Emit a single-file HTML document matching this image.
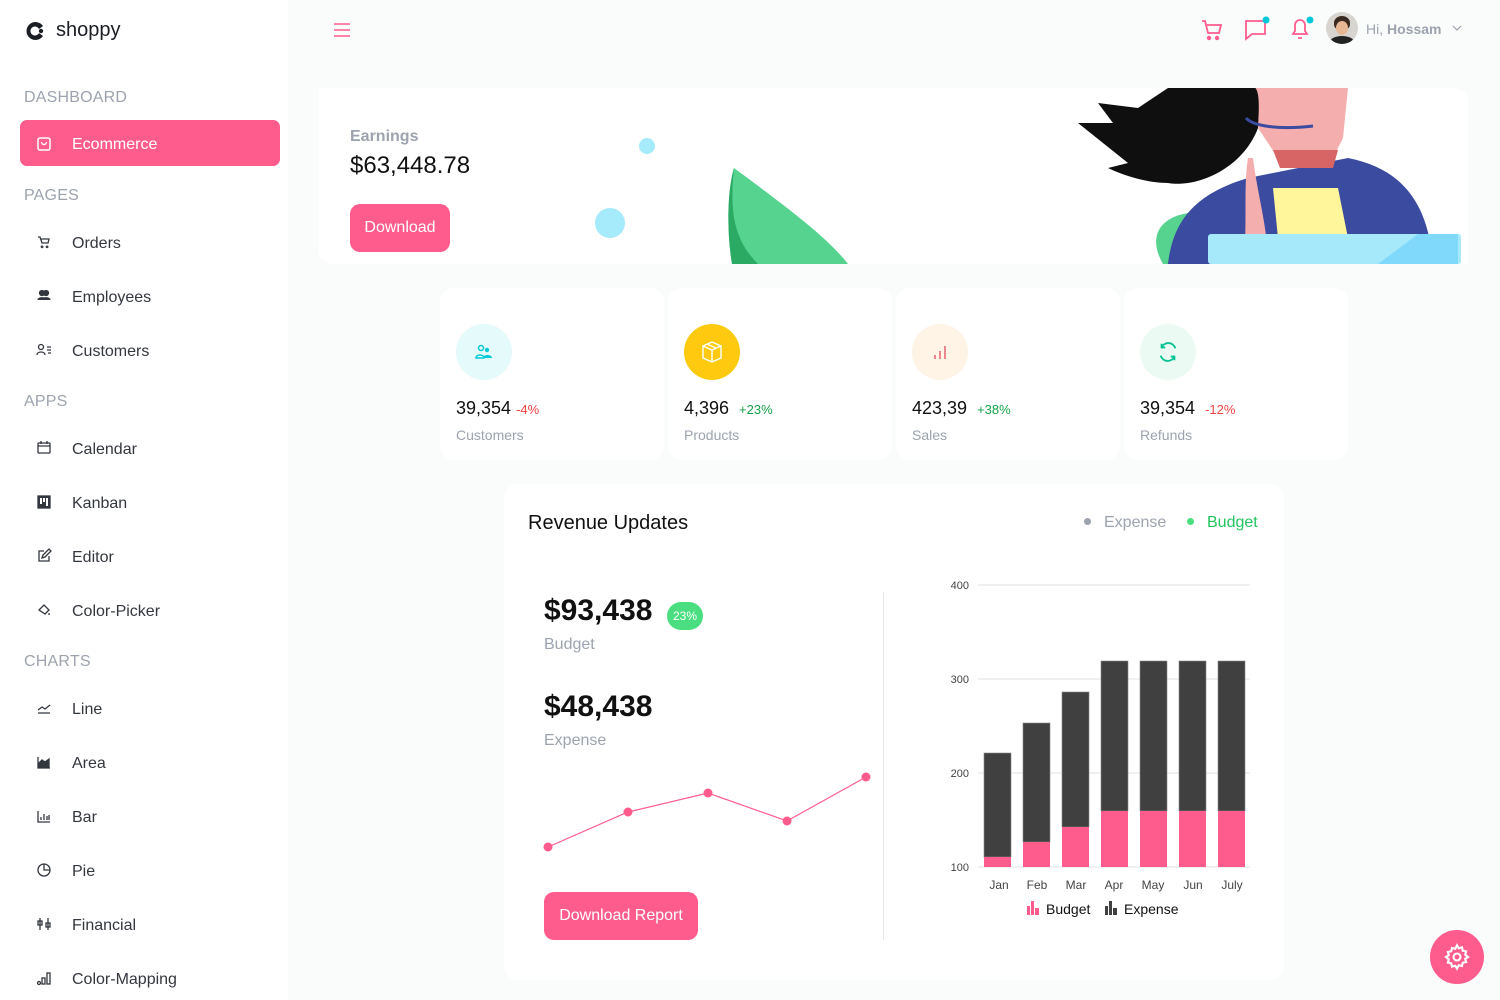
<!DOCTYPE html>
<html><head><meta charset="utf-8">
<style>
*{margin:0;padding:0;box-sizing:border-box}
body{width:1500px;height:1000px;overflow:hidden;background:#fafbfb;font-family:"Liberation Sans",sans-serif;position:relative;color:#33373e}
.a{position:absolute}
.sb{left:0;top:0;width:288px;height:1000px;background:#fff}
.sec{left:24px;font-size:16px;color:#9ca3af;letter-spacing:.2px;margin-top:2px}
.it{left:72px;font-size:16px;color:#33373e;margin-top:2px}
.card{background:#fff;border-radius:14px}
.num{font-size:18px;color:#111;margin-top:1px;font-weight:500}
.lab{font-size:14px;color:#9ca3af;margin-top:1px}
</style></head><body>
<div class="a sb">
  <svg class="a" style="left:24px;top:20px" width="22" height="22" viewBox="0 0 22 22"><path d="M19 6A9 9 0 1 0 19 16L15 13A4.5 4.5 0 1 1 15 9Z" fill="#1a1d24"/><circle cx="17" cy="11" r="2.2" fill="#1a1d24"/></svg>
  <div class="a" style="left:56px;top:19px;font-size:20px;color:#1a1d24">shoppy</div>
  <div class="a sec" style="top:87px">DASHBOARD</div>
  <div class="a" style="left:20px;top:120px;width:260px;height:46px;background:#ff5c8e;border-radius:7px"></div>
  <svg class="a" style="left:37px;top:136px" width="14" height="15" viewBox="0 0 14 15"><rect x="1" y="2" width="12" height="12" rx="2" fill="none" stroke="#fff" stroke-width="1.5"/><path d="M4.5 6a2.5 2.5 0 0 0 5 0" fill="none" stroke="#fff" stroke-width="1.4"/></svg>
  <div class="a" style="left:72px;top:136px;font-size:16px;color:#fff">Ecommerce</div>
  <div class="a sec" style="top:185px">PAGES</div>
  <div class="a it" style="top:233px">Orders</div>
  <div class="a it" style="top:287px">Employees</div>
  <div class="a it" style="top:341px">Customers</div>
  <div class="a sec" style="top:391px">APPS</div>
  <div class="a it" style="top:439px">Calendar</div>
  <div class="a it" style="top:493px">Kanban</div>
  <div class="a it" style="top:547px">Editor</div>
  <div class="a it" style="top:601px">Color-Picker</div>
  <div class="a sec" style="top:651px">CHARTS</div>
  <div class="a it" style="top:699px">Line</div>
  <div class="a it" style="top:753px">Area</div>
  <div class="a it" style="top:807px">Bar</div>
  <div class="a it" style="top:861px">Pie</div>
  <div class="a it" style="top:915px">Financial</div>
  <div class="a it" style="top:969px">Color-Mapping</div>
  <svg class="a" style="left:36px;top:234px" width="16" height="760" viewBox="0 0 16 760" fill="none" stroke="#33373e" stroke-width="1.3">
    <path d="M2 3h2l2 6h6l1-4H5M6 12a.8.8 0 1 0 .1 0M11 12a.8.8 0 1 0 .1 0"/>
    <g transform="translate(0,54)"><circle cx="6" cy="5" r="2.5" fill="#33373e"/><circle cx="10" cy="5" r="2.5" fill="#33373e"/><path d="M2 12c0-3 8-3 8 0M6 12c0-3 8-3 8 0" fill="#33373e"/></g>
    <g transform="translate(0,108)"><circle cx="5" cy="5" r="2.5"/><path d="M1 13c0-4 8-4 8 0M11 5h4M11 8h4M12 11h3"/></g>
    <g transform="translate(0,206)"><rect x="2" y="3" width="12" height="10" rx="1"/><path d="M2 6h12M5 1v3M11 1v3"/></g>
    <g transform="translate(0,260)"><rect x="2" y="2" width="12" height="12" fill="#33373e"/><rect x="4" y="4" width="2" height="6" fill="#fff" stroke="none"/><rect x="7" y="4" width="2" height="4" fill="#fff" stroke="none"/><rect x="10" y="4" width="2" height="8" fill="#fff" stroke="none"/></g>
    <g transform="translate(0,314)"><path d="M8 3H3v10h10V8M6 10l1-3 6-6 2 2-6 6z"/></g>
    <g transform="translate(0,368)"><path d="M3 8l5-5 5 5-4 4zM13 11v2"/></g>
    <g transform="translate(0,466)"><path d="M2 13h12M2 10l4-3 3 2 5-4"/></g>
    <g transform="translate(0,520)"><path d="M2 3v11h12" /><path d="M3 13V9l3-3 3 2 4-3v8z" fill="#33373e"/></g>
    <g transform="translate(0,574)"><path d="M2 3v11h12M5 12V9M8 12V6M11 12V8M13 12V7"/></g>
    <g transform="translate(0,628)"><circle cx="8" cy="8" r="6"/><path d="M8 2v6h6"/></g>
    <g transform="translate(0,682)"><path d="M4 2v12M12 2v12"/><rect x="2" y="5" width="4" height="4"/><rect x="10" y="7" width="4" height="4"/></g>
    <g transform="translate(0,736)"><circle cx="3" cy="13" r="1.5"/><rect x="6" y="8" width="3" height="6"/><rect x="11" y="3" width="3" height="11"/></g>
  </svg>
</div>

<svg class="a" style="left:333px;top:22px" width="18" height="16"><path d="M1 2h16M1 8h16M1 14h16" stroke="#ff5c8e" stroke-width="1.6"/></svg>
<svg class="a" style="left:1200px;top:18px" width="24" height="24" viewBox="0 0 24 24" fill="none" stroke="#ff5c8e" stroke-width="1.8"><path d="M2 3h3l3 12h11l2-8H7"/><circle cx="9" cy="20" r="1.3" fill="#ff5c8e"/><circle cx="17" cy="20" r="1.3" fill="#ff5c8e"/></svg>
<svg class="a" style="left:1244px;top:16px" width="28" height="26" viewBox="0 0 28 26" fill="none" stroke="#ff5c8e" stroke-width="1.8"><path d="M2 5h19v13H8l-6 5z"/><circle cx="22" cy="4" r="3.5" fill="#03c9d7" stroke="none"/></svg>
<svg class="a" style="left:1288px;top:14px" width="28" height="28" viewBox="0 0 28 28" fill="none" stroke="#ff5c8e" stroke-width="1.8"><path d="M5 20h14l-2-3V11a5 5 0 0 0-10 0v6zM10 24h4"/><circle cx="22" cy="6" r="3.5" fill="#03c9d7" stroke="none"/></svg>
<div class="a" style="left:1326px;top:12px;width:32px;height:32px;border-radius:50%;background:#d8d4d0;overflow:hidden"><div class="a" style="left:8px;top:4px;width:16px;height:14px;border-radius:50% 50% 40% 40%;background:#3a2a20"></div><div class="a" style="left:10px;top:9px;width:12px;height:14px;border-radius:50%;background:#e8b896"></div><div class="a" style="left:4px;top:24px;width:24px;height:12px;border-radius:50% 50% 0 0;background:#222"></div></div>
<div class="a" style="left:1366px;top:21px;font-size:14px;color:#9ca3af"><span>Hi,</span> <b>Hossam</b></div>
<svg class="a" style="left:1452px;top:24px" width="10" height="8"><path d="M1 2l4 4 4-4" stroke="#9ca3af" fill="none" stroke-width="1.2"/></svg>

<div class="a card" style="left:318px;top:88px;width:1150px;height:176px;overflow:hidden;border-radius:0 14px 0 14px">
  <div class="a" style="left:32px;top:40px;font-size:16px;font-weight:bold;color:#9ca3af">Earnings</div>
  <div class="a" style="left:32px;top:64px;font-size:24px;color:#111">$63,448.78</div>
  <div class="a" style="left:32px;top:116px;width:100px;height:48px;background:#ff5c8e;border-radius:10px;color:#fff;font-size:16px;text-align:center;line-height:48px">Download</div>
  <svg class="a" style="left:0;top:0" width="1150" height="176">
    <circle cx="329" cy="58" r="8" fill="#a5ebfb"/>
    <circle cx="292" cy="135" r="15" fill="#a5ebfb"/>
    <path d="M416 80C470 120 510 150 530 176H414C408 140 410 100 416 80Z" fill="#56d38f"/>
    <path d="M416 80C412 120 414 150 440 176H414C408 140 410 100 416 80Z" fill="#2aaa63"/>
    <path d="M845 176C830 150 840 130 870 125L880 176Z" fill="#56d38f"/>
    <path d="M850 176C855 130 880 105 930 90L1030 70C1080 80 1110 110 1115 176Z" fill="#3a4ba0"/>
    <path d="M955 100L1020 100L1030 150H960Z" fill="#fff59a"/>
    <path d="M935 0H1030L1025 50L1015 70H960L940 40Z" fill="#f5aeae"/>
    <path d="M955 62H1020L1015 80H962Z" fill="#d86565"/>
    <path d="M930 0C945 -10 940 30 940 40C925 80 880 100 850 95C820 95 790 80 790 80L810 75L760 35L795 35L780 15L820 20L850 0Z" fill="#0f0f10"/>
    <path d="M935 70C940 110 950 140 950 176H925C930 140 925 100 930 70Z" fill="#f5aeae"/>
    <path d="M928 30C935 38 960 42 995 38" stroke="#3a4ba0" stroke-width="3" fill="none"/>
    <rect x="890" y="146" width="253" height="30" rx="3" fill="#a5e9fb"/>
    <path d="M1060 176L1100 146H1140V176Z" fill="#80d8fb"/>
  </svg>
</div>

<div class="a card" style="left:440px;top:288px;width:224px;height:172px"></div>
<div class="a card" style="left:668px;top:288px;width:224px;height:172px"></div>
<div class="a card" style="left:896px;top:288px;width:224px;height:172px"></div>
<div class="a card" style="left:1124px;top:288px;width:224px;height:172px"></div>
<div class="a" style="left:456px;top:324px;width:56px;height:56px;border-radius:50%;background:#e5fafb"></div>
<div class="a" style="left:684px;top:324px;width:56px;height:56px;border-radius:50%;background:#fec90f"></div>
<div class="a" style="left:912px;top:324px;width:56px;height:56px;border-radius:50%;background:#fff4e5"></div>
<div class="a" style="left:1140px;top:324px;width:56px;height:56px;border-radius:50%;background:#ebfaf2"></div>
<svg class="a" style="left:474px;top:342px" width="20" height="20" viewBox="0 0 20 20" fill="#03c9d7"><circle cx="7" cy="6" r="2.5" fill="none" stroke="#03c9d7" stroke-width="1.5"/><circle cx="13" cy="8" r="2.2"/><path d="M2 16c0-4 8-4 8 0z" fill="none" stroke="#03c9d7" stroke-width="1.5"/><path d="M9 16c0-4 9-4 9 0z"/></svg>
<svg class="a" style="left:700px;top:340px" width="24" height="24" viewBox="0 0 24 24" fill="none" stroke="#fff" stroke-width="1.4"><path d="M12 2l9 4v12l-9 4-9-4V6zM3 6l9 4 9-4M12 10v12M7 4l9 4"/></svg>
<svg class="a" style="left:930px;top:342px" width="20" height="20"><path d="M5 17v-4M10 17V9M15 17V4" stroke="#e46a76" stroke-width="1.6"/></svg>
<svg class="a" style="left:1157px;top:341px" width="22" height="22" viewBox="0 0 24 24" fill="none" stroke="#00c292" stroke-width="2"><path d="M20 8A8 8 0 0 0 5 7M4 16a8 8 0 0 0 15 1M5 3v4h4M19 21v-4h-4"/></svg>
<div class="a num" style="left:456px;top:397px">39,354 <span style="font-size:13px;color:#ef4444">-4%</span></div>
<div class="a num" style="left:684px;top:397px">4,396 &nbsp;<span style="font-size:13px;color:#16a34a">+23%</span></div>
<div class="a num" style="left:912px;top:397px">423,39 &nbsp;<span style="font-size:13px;color:#16a34a">+38%</span></div>
<div class="a num" style="left:1140px;top:397px">39,354 &nbsp;<span style="font-size:13px;color:#ef4444">-12%</span></div>
<div class="a lab" style="left:456px;top:426px">Customers</div>
<div class="a lab" style="left:684px;top:426px">Products</div>
<div class="a lab" style="left:912px;top:426px">Sales</div>
<div class="a lab" style="left:1140px;top:426px">Refunds</div>

<div class="a card" style="left:504px;top:484px;width:780px;height:496px"></div>
<div class="a" style="left:528px;top:512px;font-size:20px;color:#111">Revenue Updates</div>
<div class="a" style="left:1084px;top:518px;width:7px;height:7px;border-radius:50%;background:#9ca3af"></div>
<div class="a" style="left:1104px;top:514px;font-size:16px;color:#9ca3af">Expense</div>
<div class="a" style="left:1187px;top:518px;width:7px;height:7px;border-radius:50%;background:#4ade80"></div>
<div class="a" style="left:1207px;top:514px;font-size:16px;color:#22c55e">Budget</div>
<div class="a" style="left:544px;top:594px;font-size:30px;font-weight:bold;color:#111">$93,438</div>
<div class="a" style="left:667px;top:602px;width:36px;height:28px;border-radius:14px;background:#4ade80;color:#fff;font-size:12px;text-align:center;line-height:28px">23%</div>
<div class="a" style="left:544px;top:636px;font-size:16px;color:#9ca3af">Budget</div>
<div class="a" style="left:544px;top:690px;font-size:30px;font-weight:bold;color:#111">$48,438</div>
<div class="a" style="left:544px;top:732px;font-size:16px;color:#9ca3af">Expense</div>
<div class="a" style="left:544px;top:892px;width:154px;height:48px;background:#ff5c8e;border-radius:10px;color:#fff;font-size:16px;text-align:center;line-height:48px">Download Report</div>
<div class="a" style="left:883px;top:592px;width:1px;height:348px;background:#e5e7eb"></div>
<svg class="a" style="left:0;top:0" width="1500" height="1000">
  <polyline points="548,847 628,812 708,793 787,821 866,777" fill="none" stroke="#ff5c8e" stroke-width="1.2"/>
  <g fill="#ff5c8e"><circle cx="548" cy="847" r="4.5"/><circle cx="628" cy="812" r="4.5"/><circle cx="708" cy="793" r="4.5"/><circle cx="787" cy="821" r="4.5"/><circle cx="866" cy="777" r="4.5"/></g>
  <g stroke="#ebebeb" stroke-width="1.5"><path d="M978 585H1250M978 679H1250M978 773H1250M978 867H1250"/></g>
  <g font-family="Liberation Sans" font-size="11" fill="#444" text-anchor="end"><text x="969" y="589">400</text><text x="969" y="683">300</text><text x="969" y="777">200</text><text x="969" y="871">100</text></g>
  <g fill="#404040" stroke="#888" stroke-width=".6">
    <rect x="984" y="753" width="27" height="104"/><rect x="1023" y="723" width="27" height="119"/><rect x="1062" y="692" width="27" height="135"/>
    <rect x="1101" y="661" width="27" height="150"/><rect x="1140" y="661" width="27" height="150"/><rect x="1179" y="661" width="27" height="150"/><rect x="1218" y="661" width="27" height="150"/>
  </g>
  <g fill="#ff5c8e">
    <rect x="984" y="857" width="27" height="10"/><rect x="1023" y="842" width="27" height="25"/><rect x="1062" y="827" width="27" height="40"/>
    <rect x="1101" y="811" width="27" height="56"/><rect x="1140" y="811" width="27" height="56"/><rect x="1179" y="811" width="27" height="56"/><rect x="1218" y="811" width="27" height="56"/>
  </g>
  <g font-family="Liberation Sans" font-size="12" fill="#444" text-anchor="middle"><text x="999" y="889">Jan</text><text x="1037" y="889">Feb</text><text x="1076" y="889">Mar</text><text x="1114" y="889">Apr</text><text x="1153" y="889">May</text><text x="1193" y="889">Jun</text><text x="1232" y="889">July</text></g>
  <g fill="#ff5c8e"><rect x="1027" y="906" width="3" height="9"/><rect x="1031" y="901" width="3" height="14"/><rect x="1035" y="908" width="4" height="7"/></g>
  <g fill="#404040"><rect x="1105" y="906" width="3" height="9"/><rect x="1109" y="901" width="3" height="14"/><rect x="1113" y="908" width="4" height="7"/></g>
  <g font-family="Liberation Sans" font-size="14" fill="#111"><text x="1046" y="914">Budget</text><text x="1124" y="914">Expense</text></g>
</svg>

<div class="a" style="left:1430px;top:930px;width:54px;height:54px;border-radius:50%;background:#ff5c8e"></div>
<svg class="a" style="left:1443px;top:943px" width="28" height="28" viewBox="0 0 24 24" fill="none" stroke="#fff" stroke-width="1.8"><circle cx="12" cy="12" r="3"/><path d="M12 2l1.5 2.5 2.8-.8.6 2.9 2.9.6-.8 2.8L21.5 12l-2.5 1.5.8 2.8-2.9.6-.6 2.9-2.8-.8L12 22l-1.5-2.5-2.8.8-.6-2.9-2.9-.6.8-2.8L2.5 12 5 10.5l-.8-2.8 2.9-.6.6-2.9 2.8.8z"/></svg>
</body></html>
